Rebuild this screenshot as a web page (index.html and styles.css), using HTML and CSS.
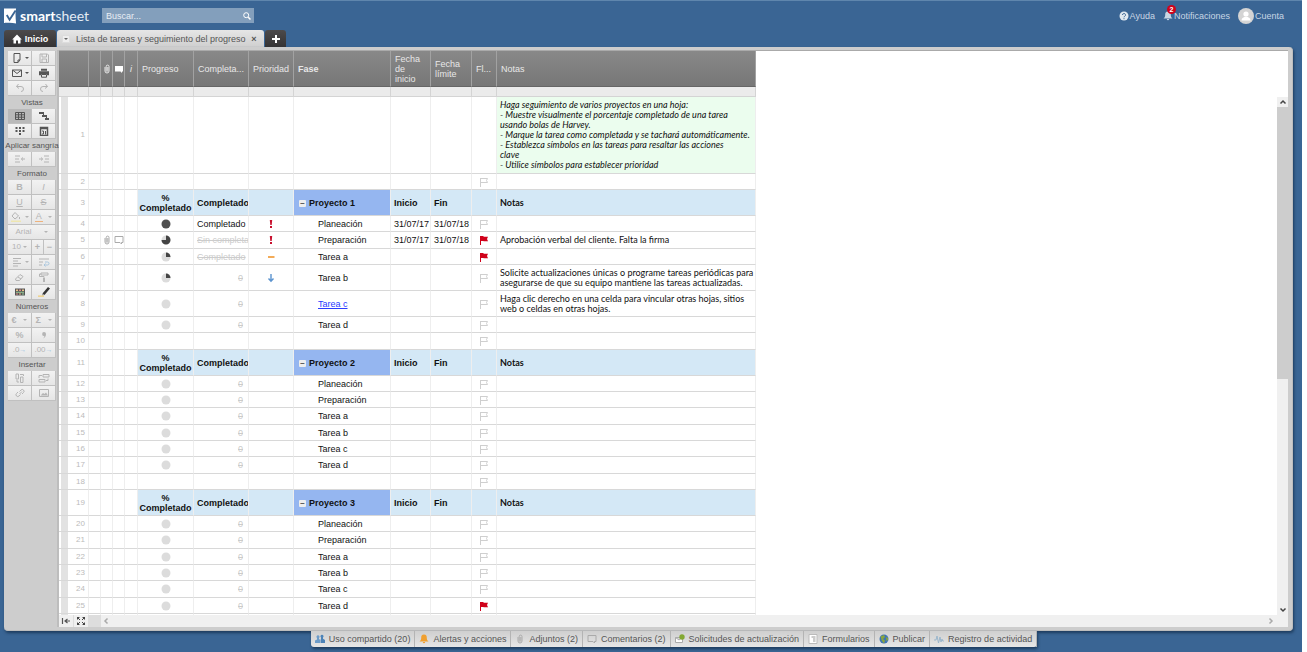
FILE: index.html
```html
<!DOCTYPE html>
<html lang="es">
<head>
<meta charset="utf-8">
<title>Lista de tareas y seguimiento del progreso - Smartsheet</title>
<link rel="stylesheet" href="styles.css">
</head>
<body>
<svg class="sprite" aria-hidden="true">
  <symbol id="i-flag" viewBox="0 0 10 10"><path d="M1.500 1v9M1.500 1.500h7L7.500 3.500 8.500 5.500h-7" fill="none" stroke="#cfcfcf"/></symbol>
  <symbol id="i-flagon" viewBox="0 0 10 10"><path d="M1 1h3.500v.7H9L8 4l1 2.300H4.500V6H2v4H1z" fill="#d0021b"/></symbol>
  <symbol id="i-h0" viewBox="0 0 10 10"><circle cx="5" cy="5" r="4.500" fill="#dcdcdc"/></symbol>
  <symbol id="i-h1" viewBox="0 0 10 10"><circle cx="5" cy="5" r="4.500" fill="#dcdcdc"/><path d="M5 5V.5A4.500 4.500 0 0 1 9.500 5z" fill="#444"/></symbol>
  <symbol id="i-h3" viewBox="0 0 10 10"><circle cx="5" cy="5" r="4.500" fill="#dcdcdc"/><path d="M5 5V.5A4.500 4.500 0 1 1 .5 5z" fill="#444"/></symbol>
  <symbol id="i-h4" viewBox="0 0 10 10"><circle cx="5" cy="5" r="4.500" fill="#505050"/></symbol>
  <symbol id="i-high" viewBox="0 0 10 10"><path d="M3.800 1h2.400l-.5 5h-1.400zM4 7h2v2H4z" fill="#c8102e"/></symbol>
  <symbol id="i-mid" viewBox="0 0 10 10"><path d="M2 4.200h6.500v1.600H2z" fill="#f0962e"/></symbol>
  <symbol id="i-low" viewBox="0 0 10 10"><path d="M5 1v7M2.500 5.500 5 8.300l2.500-2.800" fill="none" stroke="#5b93cf" stroke-width="1.400"/></symbol>
  <symbol id="i-clip" viewBox="0 0 10 10"><path d="M3 3v4a2 2 0 0 0 4 0V2.500a1.400 1.400 0 0 0-2.800 0V6.500a.8.8 0 0 0 1.600 0V3" fill="none" stroke="currentColor"/></symbol>
  <symbol id="i-talk" viewBox="0 0 10 10"><path d="M1 1.500h8v6H7.500V9L6 7.500H1z" fill="none" stroke="currentColor"/></symbol>
  <symbol id="i-talkon" viewBox="0 0 10 10"><path d="M1 2h8v5.500H8V9L6.500 7.500H1z" fill="#fff"/></symbol>
  <symbol id="i-bell" viewBox="0 0 10 10"><path d="M5 .5c2.300 0 2.800 1.500 2.800 3.500 0 1.500.5 2.500 1.700 3.500h-9C1.700 6.500 2.200 5.500 2.200 4 2.200 2 2.700.5 5 .5zM3.800 8h2.400a1.200 1.200 0 0 1-2.400 0z" fill="currentColor"/></symbol>
  <symbol id="i-up" viewBox="0 0 10 10"><path d="M2.500 6.500 5 4l2.500 2.500" fill="none" stroke="currentColor" stroke-width="1.500"/></symbol>
</svg>
<div class="app">
  <header class="top">
    <a class="logo" href="#" aria-label="smartsheet">
      <svg class="mark" viewBox="0 0 14 16"><path d="M0 0h13c-1 5-.5 10 0 16-4-1-8-1-13-.5z" fill="#fff"/><path d="M3 7l3 5 6.500-10" fill="none" stroke="#3a6594" stroke-width="2"/></svg>
      <span class="word"><b>smart</b>sheet</span>
    </a>
    <form class="search">
      <input type="search" placeholder="Buscar..." aria-label="Buscar">
      <button type="button" aria-label="Buscar"><svg class="ic" viewBox="0 0 10 10"><circle cx="4.200" cy="4.200" r="2.500" fill="none" stroke="#fff"/><path d="M6.200 6.200 8.500 8.500" stroke="#fff" stroke-width="1.500"/></svg></button>
    </form>
    <nav class="account">
      <a href="#"><svg class="ic" viewBox="0 0 10 10"><circle cx="5" cy="5" r="4.500" fill="#dfe8f0"/><path d="M3.500 4a1.500 1.500 0 1 1 2.200 1.300Q5 5.500 5 6.300M5 7.200v1" fill="none" stroke="#3a6594"/></svg>Ayuda</a>
      <a href="#" class="notif"><svg class="ic" viewBox="0 0 10 10"><use href="#i-bell"/></svg><span class="badge">2</span>Notificaciones</a>
      <a href="#"><svg class="avatar" viewBox="0 0 16 16"><circle cx="8" cy="8" r="8" fill="#d4d4d4"/><circle cx="8" cy="6" r="2.600" fill="#fff"/><path d="M3.500 12.500c0-5 9-5 9 0z" fill="#fff"/></svg>Cuenta</a>
    </nav>
  </header>

  <nav class="tabs">
    <a href="#" class="tab dark"><svg class="ic" viewBox="0 0 10 10"><path d="M5 .5 9.800 5.500H8.500V9.500H6V6.500H4v3H1.500v-4H.2z" fill="#fff"/></svg>Inicio</a>
    <div class="tab current"><button class="drop" aria-label="Menú"></button><span>Lista de tareas y seguimiento del progreso</span><button class="close" aria-label="Cerrar">×</button></div>
    <button class="tab dark add" aria-label="Agregar"><svg class="ic" viewBox="0 0 10 10"><path d="M5 1v8M1 5h8" stroke="#fff" stroke-width="2"/></svg></button>
  </nav>

  <main class="panel">
    <aside class="tools">
      <div class="set">
        <button class="on" aria-label="Nuevo"><svg viewBox="0 0 12 10"><path d="M3 .5h6v6.500L7 9.500H3zM9 7H7v2.500" fill="none" stroke="currentColor"/></svg><i class="arr"></i></button>
        <button aria-label="Guardar"><svg viewBox="0 0 12 10"><path d="M2 1h7.500L10.500 2v7.500h-8.500zM4 1v3h4.500V1M4 9.500V6h4.500v3.500" fill="none" stroke="currentColor"/></svg></button>
        <button class="on" aria-label="Enviar"><svg viewBox="0 0 12 10"><path d="M1.500 2h9v6.500h-9zM1.500 2 6 5.500 10.500 2" fill="none" stroke="currentColor"/></svg><i class="arr"></i></button>
        <button class="on" aria-label="Imprimir"><svg viewBox="0 0 12 10"><path d="M3 .8h6v2H3zM1 3.300h10v4H9V6H3v1.300H1z" fill="currentColor"/><path d="M3.500 6.500h5v2.700h-5z" fill="none" stroke="currentColor"/></svg></button>
        <button aria-label="Deshacer"><svg viewBox="0 0 12 10"><path d="M4.500 1 2.500 3.500 5 5.500M2.500 3.500H7a2.500 2.500 0 0 1 0 5" fill="none" stroke="currentColor"/></svg></button>
        <button aria-label="Rehacer"><svg viewBox="0 0 12 10"><path d="M7.500 1l2 2.500L7 5.500M9.500 3.500H5a2.500 2.500 0 0 0 0 5" fill="none" stroke="currentColor"/></svg></button>
      </div>
      <h2>Vistas</h2>
      <div class="set">
        <button class="on pressed" aria-label="Cuadrícula"><svg viewBox="0 0 12 10"><path d="M1.500 1.500h9v7h-9zM1.500 3.800h9M1.500 6.200h9M4.500 1.500v7M7.500 1.500v7" fill="none" stroke="currentColor"/></svg></button>
        <button class="on" aria-label="Gantt"><svg viewBox="0 0 12 10"><path d="M1 1h5v2H1zM4 4h5v2H4zM7 7h4v2H7zM5 3h1v1H5zM8 6h1v1H8z" fill="currentColor"/></svg></button>
        <button class="on" aria-label="Tarjetas"><svg viewBox="0 0 12 10"><path d="M1.500 1h2v2h-2zM5 1h2v2H5zM8.500 1h2v2h-2zM1.500 4h2v2h-2zM5 4h2v2H5zM8.500 4h2v2h-2zM5 7h2v2H5z" fill="currentColor"/></svg></button>
        <button class="on" aria-label="Calendario"><svg viewBox="0 0 12 10"><path d="M2.500 1.500h7v8h-7zM2 2.500h8" fill="none" stroke="currentColor" stroke-width="1.500"/><path d="M4 5h1.500v3H4M7.500 5v3.500" fill="none" stroke="currentColor"/></svg></button>
      </div>
      <h2>Aplicar sangría</h2>
      <div class="set">
        <button aria-label="Reducir sangría"><svg viewBox="0 0 12 10"><path d="M1 2h5M1 5h4M1 8h5M11 5H7.500M9 3.500 7.300 5 9 6.500" fill="none" stroke="currentColor"/></svg></button>
        <button aria-label="Aumentar sangría"><svg viewBox="0 0 12 10"><path d="M6 2h5M7 5h4M6 8h5M1 5h3.500M3 3.500 4.700 5 3 6.500" fill="none" stroke="currentColor"/></svg></button>
      </div>
      <h2>Formato</h2>
      <div class="set">
        <button><b>B</b></button><button><em>I</em></button>
        <button><u>U</u></button><button><s>S</s></button>
        <button class="split" aria-label="Relleno"><svg viewBox="0 0 12 10"><path d="M5 .5 8.500 4 5 7 2 4zM9.500 5v2" fill="none" stroke="currentColor"/><path d="M1 8.500h10v1.500H1z" fill="#eee6b0"/></svg><i class="arr"></i></button>
        <button class="split" aria-label="Color de fuente"><span class="tint">A</span><i class="arr"></i></button>
      </div>
      <div class="set one"><button>Arial<i class="arr"></i></button></div>
      <div class="set size"><button>10<i class="arr"></i></button><button><b>+</b></button><button><b>−</b></button></div>
      <div class="set">
        <button aria-label="Alinear"><svg viewBox="0 0 12 10"><path d="M2 1.500h8M2 4h5M2 6.500h8M2 9h5" stroke="currentColor"/></svg><i class="arr"></i></button>
        <button aria-label="Ajustar texto"><svg viewBox="0 0 12 10"><path d="M1 2h10M1 5h4M1 8h3" stroke="currentColor"/><path d="M6 8h3.500a1.500 1.500 0 0 0 0-3H7M7.500 6.500 6 8l1.500 1.500" fill="none" stroke="#a9c6de"/></svg></button>
        <button aria-label="Borrar formato"><svg viewBox="0 0 12 10"><path d="M1.500 7 6 2.500 9 4.500 5.500 8.500H2zM4 5l3 2" fill="none" stroke="currentColor"/></svg></button>
        <button aria-label="Copiar formato"><svg viewBox="0 0 12 10"><path d="M3 1h7v2H3zM3 2H1.500v2.500H6V6" fill="none" stroke="currentColor"/><path d="M5 6h2v4H5z" fill="currentColor"/></svg></button>
        <button class="on" aria-label="Formato condicional"><svg viewBox="0 0 12 10"><path d="M1 1.500h10v7H1z" fill="#555"/><path d="M2 2.500h2v1.500H2zM8 2.500h2v1.500H8zM5 6.500h2v1H5z" fill="#e9c089"/><path d="M5 2.500h2v1.500H5zM2 6.500h2v1H2z" fill="#d88"/><path d="M8 6.500h2v1H8zM2 4.700h8v1H2z" fill="#9c9"/></svg></button>
        <button class="on" aria-label="Resaltar cambios"><svg viewBox="0 0 12 10"><path d="M4.500 6.500 10 0l2 1.500L6.500 8z" fill="#333"/><path d="M4 8.500 4.500 6.500 6.500 8z" fill="#888"/><path d="M0 8.500h6v1.300H0z" fill="#f0cf7a"/></svg></button>
      </div>
      <h2>Números</h2>
      <div class="set">
        <button class="split"><b>€</b><i class="arr"></i></button><button class="split"><b>Σ</b><i class="arr"></i></button>
        <button><b>%</b></button><button aria-label="Separador de miles"><svg viewBox="0 0 12 10"><path d="M6 2a2 2 0 0 1 2 2c0 2-1 3.500-3 4.500 1-1 1.300-1.500 1.300-2.500A2 2 0 1 1 6 2z" fill="currentColor"/></svg></button>
        <button class="dec">.0<span class="blue">→</span></button><button class="dec">.00<span class="blue">→</span></button>
      </div>
      <h2>Insertar</h2>
      <div class="set">
        <button aria-label="Insertar columna"><svg viewBox="0 0 12 10"><path d="M2 1h2.500v5H2zM6.500 4H9v5.500H6.500zM6 1.500h3.500V3M3 7v2h2" fill="none" stroke="currentColor"/></svg></button>
        <button aria-label="Insertar fila"><svg viewBox="0 0 12 10"><path d="M5 1.500h6V4H5zM1 6.500h6V9H1zM4 2.500H1V5M8 7.500h2V5.500" fill="none" stroke="currentColor"/></svg></button>
        <button aria-label="Hipervínculo"><svg viewBox="0 0 12 10"><path d="M5.500 6 8 3.500M5.500 3.500 7 2a1.700 1.700 0 0 1 2.500 2.500L8 6M6.500 6.500 5 8A1.700 1.700 0 0 1 2.500 5.500L4 4" fill="none" stroke="currentColor"/></svg></button>
        <button aria-label="Imagen"><svg viewBox="0 0 12 10"><path d="M1.500 1.500h9v7h-9z" fill="none" stroke="currentColor"/><path d="M2.500 7.500 5 5l1.500 1L8 4.500l2 3z" fill="currentColor"/></svg></button>
      </div>
    </aside>

    <section class="work">
      <div class="sheet">
        <div class="view">
        <table>
          <colgroup><col class="c-num"><col class="c-s"><col class="c-s"><col class="c-s"><col class="c-i"><col class="c-prog"><col class="c-comp"><col class="c-prio"><col class="c-fase"><col class="c-ini"><col class="c-fin"><col class="c-flag"><col class="c-notas"></colgroup>
          <thead>
            <tr class="names"><th><th><th><svg class="ic" viewBox="0 0 10 10"><use href="#i-clip"/></svg><th><svg class="ic" viewBox="0 0 10 10"><use href="#i-talkon"/></svg><th><em>i</em><th>Progreso<th>Completa...<th>Prioridad<th><b>Fase</b><th>Fecha de inicio<th>Fecha límite<th>Fl...<th>Notas</tr>
            <tr class="filter"><td><td><td><td><td><td><td><td><td><td><td><td><td></tr>
          </thead>
          <tbody>
            <tr class="first"><th>1<td><td><td><td><td><td><td><td><td><td><td><td>Haga seguimiento de varios proyectos en una hoja:<br>- Muestre visualmente el porcentaje completado de una tarea<br>usando bolas de Harvey.<br>- Marque la tarea como completada y se tachará automáticamente.<br>- Establezca símbolos en las tareas para resaltar las acciones<br>clave<br>- Utilice símbolos para establecer prioridad</tr>
            <tr><th>2<td><td><td><td><td><td><td><td><td><td><td><svg class="ic" viewBox="0 0 10 10"><use href="#i-flag"/></svg><td></tr>
            <tr class="group"><th>3<td><td><td><td><td>% Completado<td>Completado<td><td><button class="fold" aria-label="Contraer">−</button>Proyecto 1<td>Inicio<td>Fin<td><td>Notas</tr>
            <tr><th>4<td><td><td><td><td><svg class="ic" viewBox="0 0 10 10"><use href="#i-h4"/></svg><td class="done">Completado<td><svg class="ic" viewBox="0 0 10 10"><use href="#i-high"/></svg><td>Planeación<td>31/07/17<td>31/07/18<td><svg class="ic" viewBox="0 0 10 10"><use href="#i-flag"/></svg><td></tr>
            <tr class="tall"><th>5<td><td><svg class="ic grey" viewBox="0 0 10 10"><use href="#i-clip"/></svg><td><svg class="ic grey" viewBox="0 0 10 10"><use href="#i-talk"/></svg><td><td><svg class="ic" viewBox="0 0 10 10"><use href="#i-h3"/></svg><td class="gone">Sin completar<td><svg class="ic" viewBox="0 0 10 10"><use href="#i-high"/></svg><td>Preparación<td>31/07/17<td>31/07/18<td><svg class="ic" viewBox="0 0 10 10"><use href="#i-flagon"/></svg><td>Aprobación verbal del cliente. Falta la firma</tr>
            <tr><th>6<td><td><td><td><td><svg class="ic" viewBox="0 0 10 10"><use href="#i-h1"/></svg><td class="gone">Completado<td><svg class="ic" viewBox="0 0 10 10"><use href="#i-mid"/></svg><td>Tarea a<td><td><td><svg class="ic" viewBox="0 0 10 10"><use href="#i-flagon"/></svg><td></tr>
            <tr class="double"><th>7<td><td><td><td><td><svg class="ic" viewBox="0 0 10 10"><use href="#i-h1"/></svg><td>0<td><svg class="ic" viewBox="0 0 10 10"><use href="#i-low"/></svg><td>Tarea b<td><td><td><svg class="ic" viewBox="0 0 10 10"><use href="#i-flag"/></svg><td>Solicite actualizaciones únicas o programe tareas periódicas para<br>asegurarse de que su equipo mantiene las tareas actualizadas.</tr>
            <tr class="double"><th>8<td><td><td><td><td><svg class="ic" viewBox="0 0 10 10"><use href="#i-h0"/></svg><td>0<td><td><a href="#">Tarea c</a><td><td><td><svg class="ic" viewBox="0 0 10 10"><use href="#i-flag"/></svg><td>Haga clic derecho en una celda para vincular otras hojas, sitios<br>web o celdas en otras hojas.</tr>
            <tr><th>9<td><td><td><td><td><svg class="ic" viewBox="0 0 10 10"><use href="#i-h0"/></svg><td>0<td><td>Tarea d<td><td><td><svg class="ic" viewBox="0 0 10 10"><use href="#i-flag"/></svg><td></tr>
            <tr class="tall"><th>10<td><td><td><td><td><td><td><td><td><td><td><svg class="ic" viewBox="0 0 10 10"><use href="#i-flag"/></svg><td></tr>
            <tr class="group"><th>11<td><td><td><td><td>% Completado<td>Completado<td><td><button class="fold" aria-label="Contraer">−</button>Proyecto 2<td>Inicio<td>Fin<td><td>Notas</tr>
            <tr><th>12<td><td><td><td><td><svg class="ic" viewBox="0 0 10 10"><use href="#i-h0"/></svg><td>0<td><td>Planeación<td><td><td><svg class="ic" viewBox="0 0 10 10"><use href="#i-flag"/></svg><td></tr>
            <tr><th>13<td><td><td><td><td><svg class="ic" viewBox="0 0 10 10"><use href="#i-h0"/></svg><td>0<td><td>Preparación<td><td><td><svg class="ic" viewBox="0 0 10 10"><use href="#i-flag"/></svg><td></tr>
            <tr class="tall"><th>14<td><td><td><td><td><svg class="ic" viewBox="0 0 10 10"><use href="#i-h0"/></svg><td>0<td><td>Tarea a<td><td><td><svg class="ic" viewBox="0 0 10 10"><use href="#i-flag"/></svg><td></tr>
            <tr><th>15<td><td><td><td><td><svg class="ic" viewBox="0 0 10 10"><use href="#i-h0"/></svg><td>0<td><td>Tarea b<td><td><td><svg class="ic" viewBox="0 0 10 10"><use href="#i-flag"/></svg><td></tr>
            <tr><th>16<td><td><td><td><td><svg class="ic" viewBox="0 0 10 10"><use href="#i-h0"/></svg><td>0<td><td>Tarea c<td><td><td><svg class="ic" viewBox="0 0 10 10"><use href="#i-flag"/></svg><td></tr>
            <tr class="tall"><th>17<td><td><td><td><td><svg class="ic" viewBox="0 0 10 10"><use href="#i-h0"/></svg><td>0<td><td>Tarea d<td><td><td><svg class="ic" viewBox="0 0 10 10"><use href="#i-flag"/></svg><td></tr>
            <tr><th>18<td><td><td><td><td><td><td><td><td><td><td><svg class="ic" viewBox="0 0 10 10"><use href="#i-flag"/></svg><td></tr>
            <tr class="group"><th>19<td><td><td><td><td>% Completado<td>Completado<td><td><button class="fold" aria-label="Contraer">−</button>Proyecto 3<td>Inicio<td>Fin<td><td>Notas</tr>
            <tr><th>20<td><td><td><td><td><svg class="ic" viewBox="0 0 10 10"><use href="#i-h0"/></svg><td>0<td><td>Planeación<td><td><td><svg class="ic" viewBox="0 0 10 10"><use href="#i-flag"/></svg><td></tr>
            <tr class="tall"><th>21<td><td><td><td><td><svg class="ic" viewBox="0 0 10 10"><use href="#i-h0"/></svg><td>0<td><td>Preparación<td><td><td><svg class="ic" viewBox="0 0 10 10"><use href="#i-flag"/></svg><td></tr>
            <tr><th>22<td><td><td><td><td><svg class="ic" viewBox="0 0 10 10"><use href="#i-h0"/></svg><td>0<td><td>Tarea a<td><td><td><svg class="ic" viewBox="0 0 10 10"><use href="#i-flag"/></svg><td></tr>
            <tr><th>23<td><td><td><td><td><svg class="ic" viewBox="0 0 10 10"><use href="#i-h0"/></svg><td>0<td><td>Tarea b<td><td><td><svg class="ic" viewBox="0 0 10 10"><use href="#i-flag"/></svg><td></tr>
            <tr class="tall"><th>24<td><td><td><td><td><svg class="ic" viewBox="0 0 10 10"><use href="#i-h0"/></svg><td>0<td><td>Tarea c<td><td><td><svg class="ic" viewBox="0 0 10 10"><use href="#i-flag"/></svg><td></tr>
            <tr><th>25<td><td><td><td><td><svg class="ic" viewBox="0 0 10 10"><use href="#i-h0"/></svg><td>0<td><td>Tarea d<td><td><td><svg class="ic" viewBox="0 0 10 10"><use href="#i-flagon"/></svg><td></tr>
            <tr><th><td><td><td><td><td><td><td><td><td><td><td><td></tr>
          </tbody>
        </table>
        </div>
        <div class="vbar">
          <svg class="ic" viewBox="0 0 10 10"><use href="#i-up"/></svg>
          <div class="thumb"></div>
          <svg class="ic down" viewBox="0 0 10 10"><use href="#i-up"/></svg>
        </div>
      </div>
      <div class="hbar">
        <button aria-label="Contraer panel"><svg class="ic" viewBox="0 0 10 10"><path d="M1.500 2v6M9 5H4M6.500 3 4 5l2.500 2" fill="none" stroke="#555" stroke-width="1.200"/></svg></button>
        <button aria-label="Pantalla completa"><svg class="ic" viewBox="0 0 10 10"><path d="M1 1h3L1 4zM9 1v3L6 1zM1 9V6l3 3zM9 9H6l3-3z" fill="#444"/><path d="M2 2l2 2M8 2 6 4M2 8l2-2M8 8 6 6" stroke="#444"/></svg></button>
        <span class="grip"></span>
        <svg class="ic left" viewBox="0 0 10 10"><use href="#i-up"/></svg>
        <span class="fill"></span>
        <svg class="ic right" viewBox="0 0 10 10"><use href="#i-up"/></svg>
      </div>
    </section>
  </main>

  <footer class="dock">
    <div class="bar">
      <a href="#"><svg class="ic" viewBox="0 0 10 10"><path d="M3 1.200a1.600 1.600 0 0 1 1 2.800v1l1.300 1V9H0V6.500L2 5.500V4A1.600 1.600 0 0 1 3 1.200z" fill="#6d9cc9"/><path d="M7 .8a1.600 1.600 0 0 1 1 2.800v1.200L10 6v3H5.700V5.800L6 4.500V3.600A1.600 1.600 0 0 1 7 .8z" fill="#4c83b8"/></svg>Uso compartido (20)</a>
      <a href="#"><svg class="ic orange" viewBox="0 0 10 10"><use href="#i-bell"/></svg>Alertas y acciones</a>
      <a href="#"><svg class="ic grey" viewBox="0 0 10 10"><use href="#i-clip"/></svg>Adjuntos (2)</a>
      <a href="#"><svg class="ic grey" viewBox="0 0 10 10"><use href="#i-talk"/></svg>Comentarios (2)</a>
      <a href="#"><svg class="ic" viewBox="0 0 10 10"><path d="M.5 3.500h7v5h-7zM.5 3.500 4 6l3.500-2.500" fill="#fff" stroke="#aaa"/><circle cx="7" cy="3" r="2.700" fill="#83a832"/></svg>Solicitudes de actualización</a>
      <a href="#"><svg class="ic" viewBox="0 0 10 10"><path d="M1 .5h8v9H1z" fill="#fff" stroke="#bbb"/><path d="M3.500 3h4M5 5h2.500M5 7h2.500" stroke="#999"/></svg>Formularios</a>
      <a href="#"><svg class="ic" viewBox="0 0 10 10"><circle cx="5" cy="5" r="4.500" fill="#3f74b5"/><path d="M1.500 2.500 5 1l1 2-2 2 2 1.500-1 3L3 7zM7 3l2 1v2l-1.500 1z" fill="#8aa63c"/></svg>Publicar</a>
      <a href="#"><svg class="ic" viewBox="0 0 10 10"><path d="M0 6h2l1-4 1.500 7L6 3l1 5 1-3 .7 2H10" fill="none" stroke="#9ab6cc"/></svg>Registro de actividad</a>
    </div>
  </footer>
</div>
</body>
</html>
```
FILE: styles.css
```css
* { box-sizing: border-box; }
html, body { height: 100%; }
body { margin: 0; background: #fff; font: 9px/10px "Liberation Sans", Arial, sans-serif; color: #111; }
button { font: inherit; color: inherit; border: 0; padding: 0; background: none; }
a { color: inherit; text-decoration: none; }
.sprite { display: none; }
.ic { width: 10px; height: 10px; flex: none; }
.grey { color: #aaa; }
.orange { color: #f0a030; }

.app { height: 100vh; margin-right: 5px; background: #3a6594; border-top: 1px solid #5f86ad; display: flex; flex-direction: column; }

.top { display: flex; align-items: center; height: 29px; padding: 0 18px 0 4px; flex: none; }
.logo { display: flex; align-items: center; gap: 3px; width: 98px; color: #fff; }
.mark { width: 13px; height: 16px; }
.word { font: 14px/16px Lato, sans-serif; color: #e4ecf4; }
.word b { font-weight: bold; color: #fff; }
.search { display: flex; align-items: center; width: 152px; height: 15px; background: #839fbc; padding: 0 2px 0 4px; }
.search input { flex: 1; min-width: 0; border: 0; padding: 0; background: none; font: inherit; color: #fff; }
.search input::placeholder { color: #e8eef4; opacity: 1; }
.search button { display: flex; }
.account { display: flex; align-items: center; gap: 8px; margin-left: auto; color: #c8d6e4; }
.account a { display: flex; align-items: center; gap: 1px; position: relative; }
.avatar { width: 16px; height: 16px; }
.badge { position: absolute; left: 4px; top: -6px; width: 9px; height: 9px; border-radius: 50%; background: #d0021b; color: #fff; font: bold 7px/9px "Liberation Sans", sans-serif; text-align: center; }

.tabs { display: flex; gap: 1px; height: 17px; padding-left: 4px; flex: none; align-items: stretch; }
.tab { display: flex; align-items: center; border-radius: 3px 3px 0 0; }
.tab.dark { background: linear-gradient(#4c4a4b, #353334); color: #fff; font-weight: bold; gap: 3px; width: 52px; justify-content: center; }
.tab.add { width: 21px; }
.tab.current { background: linear-gradient(#e6e6e6, #cfcfcf); color: #555; padding: 0 6px 0 5px; width: 207px; }
.tab.current span { flex: 1; padding-left: 6px; white-space: nowrap; }
.drop { width: 8px; height: 8px; border: 1px solid #ddd; background: #eee; display: flex; align-items: center; justify-content: center; }
.drop::before, .arr { content: ""; border: 2px solid transparent; border-top-color: #666; border-bottom: 0; width: 0; height: 0; }
.close { width: 8px; font-weight: bold; }

.panel { flex: 1; min-height: 0; display: flex; margin: 0 9px 0 4px; background: #cdcdcd; border: solid #bdbdbd; border-width: 0 1px 1px 0; border-radius: 0 4px 4px 4px; box-shadow: 1px 2px 3px #1d3c5e; padding: 3px 4px 3px 0; }
.tools { width: 55px; flex: none; padding: 1px 1px 0 4px; border-right: 2px solid #bdbdbd; color: #b4b4b4; }
.tools h2 { margin: 0 -4px; font: 8px/13px "Liberation Sans", sans-serif; color: #555; text-align: center; white-space: nowrap; }
.set { display: grid; grid-template-columns: 1fr 1fr; grid-auto-rows: 15px; }
.set.one { grid-template-columns: 1fr; }
.set.size { grid-template-columns: 2fr 1fr 1fr; }
.set button { display: flex; align-items: center; justify-content: center; gap: 2px; font-size: 8px; background: linear-gradient(#f2f2f2, #e6e6e6); border: solid #c0c0c0; border-width: 0 1px 1px 0; min-width: 0; }
.set button.on { color: #555; }
.set button.pressed { background: #b9b9b9; }
.set button.dec { gap: 0; }
.set svg { width: 12px; height: 10px; }
.set b, .set em, .set u, .set s { font-size: 9px; }
.set .arr { border-top-color: currentColor; }
.set.one .arr { margin-left: 10px; }
.set .split { justify-content: space-around; gap: 0; }
.tint { font-size: 9px; line-height: 9px; border-bottom: 1px solid #eeb27c; padding: 0 1px; }
.blue { color: #9cc3e0; font-size: 7px; }

.work { flex: 1; min-width: 0; display: flex; flex-direction: column; background: #fff; border-top: 1px solid #aaa; }
.sheet { flex: 1; min-height: 0; display: flex; }
.view { flex: 1; min-width: 0; overflow: hidden; }
.vbar { width: 11px; margin-top: 46px; background: #f0f0f0; display: flex; flex-direction: column; align-items: center; color: #444; }
.thumb { width: 11px; flex: 0 0 272px; margin-bottom: auto; background: #cdcdcd; }
.down { transform: rotate(180deg); }
.left { transform: rotate(-90deg); color: #aaa; }
.right { transform: rotate(90deg); color: #aaa; margin-right: 12px; }
.hbar { height: 12px; flex: none; display: flex; align-items: center; background: #f0f0f0; }
.hbar button { width: 15px; height: 12px; display: flex; justify-content: center; align-items: center; border-right: 1px solid #ddd; }
.grip { width: 12px; height: 12px; background: #ddd; }
.fill { flex: 1; }

table { table-layout: fixed; width: 697px; border-collapse: separate; border-spacing: 0; }
.c-num { width: 30px; } .c-s { width: 12px; } .c-i { width: 13px; } .c-prog { width: 56px; } .c-comp { width: 55px; } .c-prio { width: 45px; }
.c-fase { width: 97px; } .c-ini { width: 40px; } .c-fin { width: 41px; } .c-flag { width: 25px; } .c-notas { width: 259px; }
th, td { padding: 0; font-weight: normal; text-align: left; vertical-align: middle; overflow: hidden; }
td svg, th svg { display: block; margin: 0 auto; }
.names th { height: 36px; padding: 0 4px; background: linear-gradient(#888, #777); color: #e8e8e8; border-right: 1px solid #a2a2a2; border-bottom: 1px solid #666; }
.names th:nth-child(-n+5) { padding: 0; text-align: center; }
.filter td { height: 10px; background: #ebebeb; border-right: 1px solid #d4d4d4; border-bottom: 1px solid #d4d4d4; }
tbody td, tbody th { height: 16px; border-right: 1px solid #eee; border-bottom: 1px solid #d8d8d8; white-space: nowrap; }
tbody th { background: linear-gradient(#e2e2e2, #e2e2e2) 2px 0 / 7px 100% no-repeat; color: #bbb; text-align: right; padding-right: 3px; font-size: 8px; }
.tall td { height: 17px; }
.double td, .group td { height: 26px; }
.first td { height: 77px; }
tbody td:nth-child(6) { text-align: center; }
tbody td:nth-child(7) { padding: 0 5px 0 3px; color: #ccc; text-align: right; text-decoration: line-through; }
tbody td.done { color: #111; text-decoration: none; text-align: left; }
tbody td.gone { text-align: left; padding-right: 0; }
tbody td:nth-child(9) { padding-left: 24px; }
tbody td:nth-child(9) a { color: #2a3cff; text-decoration: underline; }
tbody td:nth-child(10), tbody td:nth-child(11) { padding-left: 3px; }
tbody td:nth-child(13) { padding: 0 0 0 3px; font-family: Lato, "Liberation Sans", sans-serif; }
.first td:nth-child(13) { background: #ebfdee; font-style: italic; }
.group td:nth-child(n+6) { background: #d4e8f6; font-weight: bold; color: #111; text-decoration: none; text-align: left; }
.group td:nth-child(7) { padding-right: 0; }
.group td:nth-child(6) { text-align: center; white-space: normal; }
.group td:nth-child(9) { background: #95b6f0; padding-left: 5px; }
.fold { width: 7px; height: 7px; margin-right: 3px; background: #eee; color: #555; font: bold 8px/7px "Liberation Sans", sans-serif; vertical-align: middle; border-radius: 1px; }

.dock { height: 21px; flex: none; display: flex; justify-content: center; padding-right: 46px; padding-left: 92px; }
.bar { display: flex; height: 16px; background: linear-gradient(#cfcfcf, #e6e6e6); box-shadow: 1px 2px 3px #1d3c5e; border-radius: 0 0 3px 3px; z-index: 1; }
.bar a { display: flex; align-items: center; gap: 4px; padding: 0 4px; color: #555; white-space: nowrap; border-right: 1px solid #b4b4b4; }
```
